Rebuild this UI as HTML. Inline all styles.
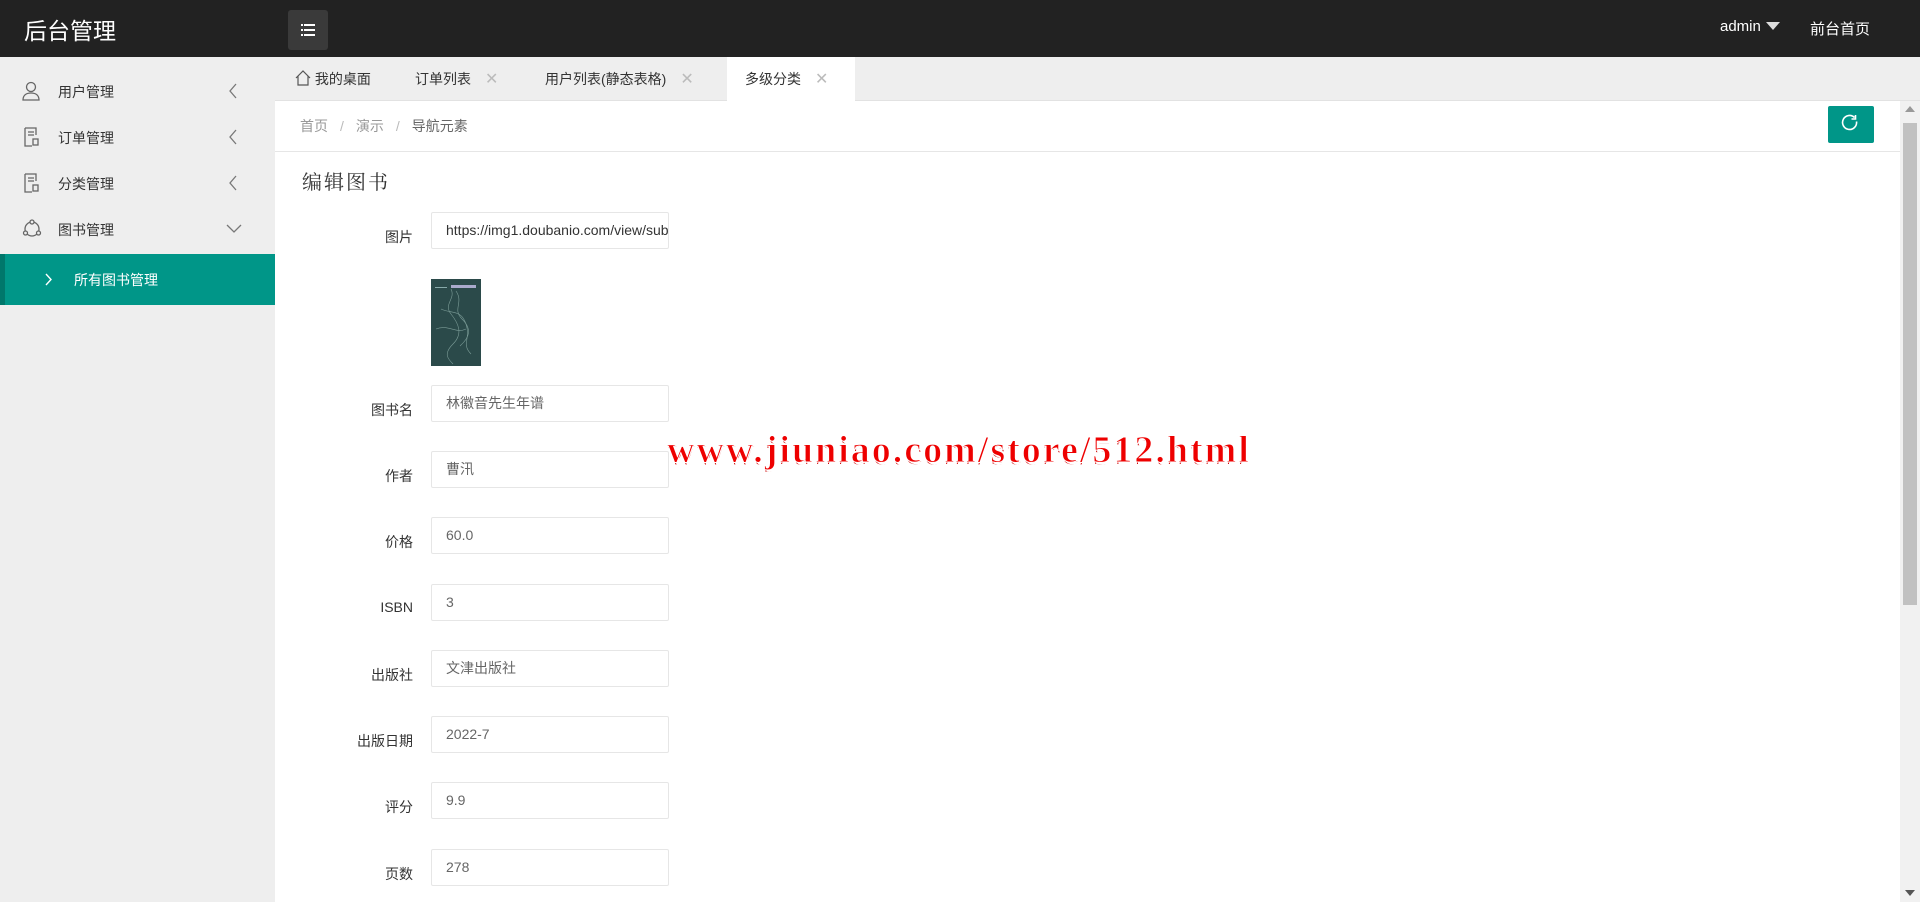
<!DOCTYPE html>
<html><head><meta charset="utf-8">
<style>
*{margin:0;padding:0;box-sizing:border-box}
body{width:1920px;height:902px;overflow:hidden;background:#fff;font-family:"Liberation Sans","Noto Sans CJK SC",sans-serif;font-size:14px;color:#333;position:relative}
.hdr{position:absolute;left:0;top:0;width:1920px;height:57px;background:#222;}
.logo{position:absolute;left:24px;top:12px;color:#fff;font-size:23px;}
.mbtn{position:absolute;left:288px;top:10px;width:40px;height:40px;background:#3a3a3a;border-radius:3px}
.hr{position:absolute;top:18px;color:#fff;font-size:15px}
.side{position:absolute;left:0;top:57px;width:275px;height:845px;background:#eeeeee}
.si{position:absolute;left:0;width:275px;height:46px;font-size:14px;color:#333}
.si .t{position:absolute;left:58px;top:13px}
.si svg{position:absolute}
.act{position:absolute;left:0;top:197px;width:275px;height:51px;background:#009688;border-left:5px solid #00776b;color:#fff}
.tabs{position:absolute;left:275px;top:57px;width:1645px;height:44px;background:#eeeeee;border-bottom:1px solid #e2e2e2}
.tab{position:absolute;top:0;height:44px;line-height:44px;font-size:14px;color:#333}
.x{color:#bbb;font-size:16px;margin-left:14px}
.bc{position:absolute;left:300px;top:116px;color:#999;font-size:14px}
.bc b{font-weight:normal;margin:0 12px;color:#bbb}
.line{position:absolute;left:275px;top:151px;width:1625px;height:1px;background:#e6e6e6}
.rf{position:absolute;left:1828px;top:106px;width:46px;height:37px;background:#009688;border-radius:2px}
.sb{position:absolute;left:1900px;top:101px;width:20px;height:801px;background:#f1f1f1}
.th{position:absolute;left:1903px;top:123px;width:14px;height:482px;background:#c1c1c1}
h2{position:absolute;left:302px;top:166px;font-family:"Noto Serif CJK SC","Liberation Serif",serif;font-weight:normal;font-size:20px;color:#333;letter-spacing:2px}
.lb{position:absolute;width:150px;left:263px;text-align:right;font-size:14px;color:#333}
.in{position:absolute;left:431px;width:238px;height:37px;border:1px solid #e6e6e6;border-radius:2px;padding-left:14px;line-height:35px;font-size:14px;color:#666;overflow:hidden;white-space:nowrap}
.wm{position:absolute;left:667px;top:428px;font-family:"Liberation Serif",serif;font-weight:bold;font-size:38px;color:#e00;-webkit-text-stroke:1px #fff;text-shadow:2px 2px 0 #fff,-1px -1px 0 #fff,1px 2px 0 #c00;letter-spacing:2px;white-space:nowrap}
</style></head><body>
<div class="hdr">
<div class="logo">后台管理</div>
<div class="mbtn"><svg width="40" height="40" viewBox="0 0 40 40"><g fill="#fff"><rect x="13" y="14" width="2" height="2"/><rect x="16" y="14" width="11" height="2"/><rect x="13" y="19" width="2" height="2"/><rect x="16" y="19" width="11" height="2"/><rect x="13" y="24" width="2" height="2"/><rect x="16" y="24" width="11" height="2"/></g></svg></div>
<div class="hr" style="left:1720px">admin</div>
<svg style="position:absolute;left:1766px;top:22px" width="14" height="8"><path d="M0 0H14L7 8Z" fill="#ddd"/></svg>
<div class="hr" style="left:1810px">前台首页</div>
</div>
<div class="side">
<div class="si" style="top:12px"><svg style="left:22px;top:12px" width="18" height="20" viewBox="0 0 18 20" fill="none" stroke="#666" stroke-width="1.3"><circle cx="9" cy="6" r="4.5"/><path d="M1 19c0-5 3.5-7 8-7s8 2 8 7z"/></svg><span class="t">用户管理</span><svg style="left:228px;top:14px" width="10" height="16"><path d="M8 1L2 8l6 7" stroke="#777" fill="none" stroke-width="1.3"/></svg></div>
<div class="si" style="top:58px"><svg style="left:24px;top:12px" width="16" height="20" viewBox="0 0 16 20" fill="none" stroke="#666" stroke-width="1.3"><path d="M1 1h11v7M1 1v18h7"/><path d="M4 5h6M4 8h6"/><rect x="9" y="12" width="5" height="6"/></svg><span class="t">订单管理</span><svg style="left:228px;top:14px" width="10" height="16"><path d="M8 1L2 8l6 7" stroke="#777" fill="none" stroke-width="1.3"/></svg></div>
<div class="si" style="top:104px"><svg style="left:24px;top:12px" width="16" height="20" viewBox="0 0 16 20" fill="none" stroke="#666" stroke-width="1.3"><path d="M1 1h11v7M1 1v18h7"/><path d="M4 5h6M4 8h6"/><rect x="9" y="12" width="5" height="6"/></svg><span class="t">分类管理</span><svg style="left:228px;top:14px" width="10" height="16"><path d="M8 1L2 8l6 7" stroke="#777" fill="none" stroke-width="1.3"/></svg></div>
<div class="si" style="top:150px"><svg style="left:22px;top:12px" width="20" height="20" viewBox="0 0 20 20" fill="none" stroke="#666" stroke-width="1.3"><circle cx="10" cy="10" r="7"/><circle cx="10" cy="3" r="2" fill="#eee"/><circle cx="3.5" cy="14" r="2" fill="#eee"/><circle cx="16.5" cy="14" r="2" fill="#eee"/></svg><span class="t">图书管理</span><svg style="left:226px;top:17px" width="16" height="10"><path d="M1 1l7 7 7-7" stroke="#777" fill="none" stroke-width="1.3"/></svg></div>
<div class="act"><svg style="position:absolute;left:40px;top:19px" width="8" height="13"><path d="M1 1l5 5.5L1 12" stroke="#fff" fill="none" stroke-width="1.4"/></svg><span style="position:absolute;left:69px;top:16px;font-size:14px">所有图书管理</span></div>
</div>
<div class="tabs">
<div class="tab" style="left:20px"><svg style="vertical-align:-2px" width="16" height="16" viewBox="0 0 16 16" fill="none" stroke="#555" stroke-width="1.2"><path d="M1 8L8 1l7 7M3 6v9h10V6"/></svg> 我的桌面</div>
<div class="tab" style="left:140px">订单列表<span class="x">✕</span></div>
<div class="tab" style="left:270px">用户列表(静态表格)<span class="x">✕</span></div>
<div class="tab" style="left:452px;width:128px;background:#fff;padding-left:18px">多级分类<span class="x">✕</span></div>
</div>
<div class="bc">首页<b>/</b>演示<b>/</b><span style="color:#666">导航元素</span></div>
<div class="rf"><svg width="46" height="37" viewBox="0 0 46 37"><path d="M28.5 15.5a7 7 0 1 1-2-4" stroke="#fff" fill="none" stroke-width="1.6"/><path d="M27.5 9v4h-4" stroke="#fff" fill="none" stroke-width="1.6"/></svg></div>
<div class="line"></div>
<div class="sb"></div><div class="th"></div>
<svg style="position:absolute;left:1905px;top:106px" width="10" height="6"><path d="M0 6L5 0l5 6z" fill="#999"/></svg>
<svg style="position:absolute;left:1905px;top:890px" width="10" height="6"><path d="M0 0L5 6l5-6z" fill="#555"/></svg>
<h2>编辑图书</h2>
<div class="lb" style="top:227px">图片</div>
<div class="in" style="top:212px;color:#333">https://img1.doubanio.com/view/subject/l/public/s34224497.jpg</div>
<svg style="position:absolute;left:431px;top:279px" width="50" height="87" viewBox="0 0 50 87"><rect width="50" height="87" fill="#2b4a4a"/><g stroke="#8fb0aa" stroke-width="0.6" fill="none" opacity=".8"><path d="M20 10c5 10-8 15 0 25s12 20 2 30-5 15 0 20"/><path d="M25 12c8 12-4 18 6 28s8 18-2 27"/><path d="M10 30c10 5 20 0 25 15s-5 20 5 30"/><path d="M5 50c12-5 20 5 30 0"/></g><rect x="20" y="6" width="25" height="3" fill="#aac"/><rect x="4" y="8" width="12" height="1" fill="#8aa"/></svg>
<div class="lb" style="top:400px">图书名</div><div class="in" style="top:385px">林徽音先生年谱</div>
<div class="lb" style="top:466px">作者</div><div class="in" style="top:451px">曹汛</div>
<div class="lb" style="top:532px">价格</div><div class="in" style="top:517px">60.0</div>
<div class="lb" style="top:599px">ISBN</div><div class="in" style="top:584px">3</div>
<div class="lb" style="top:665px">出版社</div><div class="in" style="top:650px">文津出版社</div>
<div class="lb" style="top:731px">出版日期</div><div class="in" style="top:716px">2022-7</div>
<div class="lb" style="top:797px">评分</div><div class="in" style="top:782px">9.9</div>
<div class="lb" style="top:864px">页数</div><div class="in" style="top:849px">278</div>
<div class="wm">www.jiuniao.com/store/512.html</div>
</body></html>
